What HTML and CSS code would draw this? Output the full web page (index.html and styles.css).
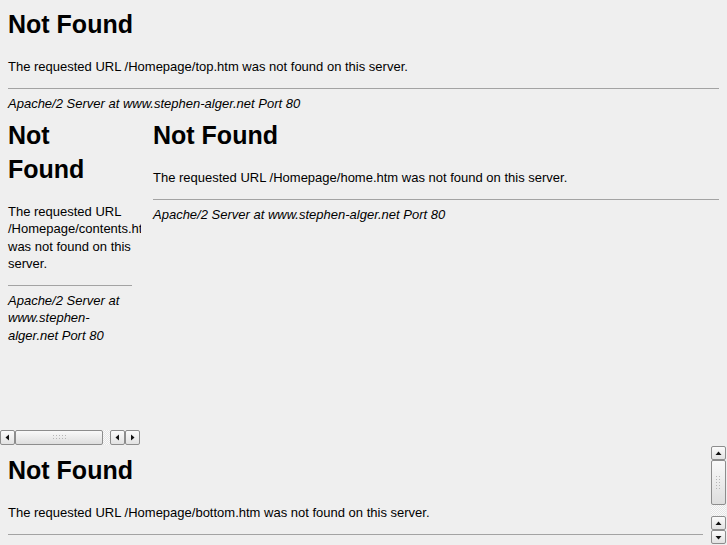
FILE: index.html
```html
<!DOCTYPE html>
<html>
<head>
<meta charset="utf-8">
<title>Frames</title>
<link rel="stylesheet" href="styles.css">
</head>
<body>
<div class="screen">
  <section class="frame top">
    <div class="doc">
      <h1>Not Found</h1>
      <p>The requested URL /Homepage/top.htm was not found on this server.</p>
      <hr>
      <address>Apache/2 Server at www.stephen-alger.net Port 80</address>
    </div>
  </section>

  <div class="middle">
    <section class="frame left">
      <div class="view">
        <div class="doc narrow">
          <h1>Not Found</h1>
          <p>The requested URL /Homepage/contents.htm was not found on this server.</p>
          <hr>
          <address>Apache/2 Server at www.stephen-alger.net Port 80</address>
        </div>
      </div>
      <div class="hbar">
        <span class="btn"><svg width="7" height="7" viewBox="0 0 7 7"><path d="M5 0.5 L1.5 3.5 L5 6.5Z"/></svg></span>
        <span class="thumb hthumb"><i class="grip"></i></span>
        <span class="track"></span>
        <span class="btn"><svg width="7" height="7" viewBox="0 0 7 7"><path d="M5 0.5 L1.5 3.5 L5 6.5Z"/></svg></span>
        <span class="btn"><svg width="7" height="7" viewBox="0 0 7 7"><path d="M2 0.5 L5.5 3.5 L2 6.5Z"/></svg></span>
      </div>
    </section>

    <section class="frame right">
      <div class="doc">
        <h1>Not Found</h1>
        <p>The requested URL /Homepage/home.htm was not found on this server.</p>
        <hr>
        <address>Apache/2 Server at www.stephen-alger.net Port 80</address>
      </div>
    </section>
  </div>

  <section class="frame bottom">
    <div class="view">
      <div class="doc">
        <h1>Not Found</h1>
        <p>The requested URL /Homepage/bottom.htm was not found on this server.</p>
        <hr>
        <address>Apache/2 Server at www.stephen-alger.net Port 80</address>
      </div>
    </div>
    <div class="vbar">
      <span class="btn vbtn"><svg width="7" height="7" viewBox="0 0 7 7"><path d="M0.5 5 L3.5 1.5 L6.5 5Z"/></svg></span>
      <span class="thumb vthumb"><i class="grip vgrip"></i></span>
      <span class="track"></span>
      <span class="btn vbtn"><svg width="7" height="7" viewBox="0 0 7 7"><path d="M0.5 5 L3.5 1.5 L6.5 5Z"/></svg></span>
      <span class="btn vbtn"><svg width="7" height="7" viewBox="0 0 7 7"><path d="M0.5 2 L3.5 5.5 L6.5 2Z"/></svg></span>
    </div>
  </section>
</div>
</body>
</html>
```

FILE: styles.css
```css
html, body {
  margin: 0;
  padding: 0;
  background: #efefef;
}

.screen {
  width: 727px;
  height: 545px;
  display: grid;
  grid-template-rows: 111px 335px 99px;
  overflow: hidden;
}

.frame {
  overflow: hidden;
  min-height: 0;
  min-width: 0;
  background: #efefef;
}

.middle {
  display: grid;
  grid-template-columns: 141px 1fr;
  column-gap: 4px;
  min-height: 0;
}

.doc {
  padding: 7px 8px 8px;
  font: 13px/1.33 "Liberation Sans", Arial, sans-serif;
  color: #000;
}

.doc.narrow {
  padding-right: 9px;
}

.doc h1 {
  font-size: 25px;
  line-height: 34px;
  font-weight: bold;
  margin: 0 0 17px;
}

.doc p {
  margin: 17px 0 13px;
}

.doc hr {
  height: 0;
  border: 0;
  border-top: 1px solid #a3a3a3;
  margin: 6px 0 6px;
}

.doc address {
  font-style: italic;
  margin: 0;
}

/* left frame with horizontal scrollbar */
.left {
  display: flex;
  flex-direction: column;
}

.left .view {
  flex: 1;
  min-height: 0;
  overflow: hidden;
}

.hbar {
  height: 15px;
  display: flex;
  margin-bottom: 1px;
  width: 140px;
}

.btn {
  box-sizing: border-box;
  width: 15px;
  flex: none;
  border: 1px solid #8d8d8d;
  border-radius: 2px;
  background: linear-gradient(#fbfbfb, #e2e2e2);
  display: flex;
  align-items: center;
  justify-content: center;
}

.btn svg path {
  fill: #111;
}

.thumb {
  box-sizing: border-box;
  border: 1px solid #8d8d8d;
  border-radius: 2px;
  background: linear-gradient(#f9f9f9, #dedede);
  display: flex;
  align-items: center;
  justify-content: center;
}

.hthumb {
  width: 88px;
  flex: none;
}

.grip {
  display: block;
  width: 15px;
  height: 7px;
  background: radial-gradient(circle, #b5b5b5 0.6px, transparent 1px) 0 0 / 3px 3px;
}

.track {
  flex: 1;
  background: repeating-conic-gradient(#fafafa 0 25%, #e6e6e6 0 50%) 0 0 / 2px 2px;
}

/* bottom frame with vertical scrollbar */
.bottom {
  display: flex;
}

.bottom .view {
  flex: 1;
  min-width: 0;
  overflow: hidden;
}

.vbar {
  width: 15px;
  margin-right: 1px;
  display: flex;
  flex-direction: column;
  padding-bottom: 1px;
}

.vbtn {
  width: 15px;
  height: 14px;
}

.vthumb {
  height: 45px;
  flex: none;
}

.vgrip {
  width: 7px;
  height: 15px;
}
```
